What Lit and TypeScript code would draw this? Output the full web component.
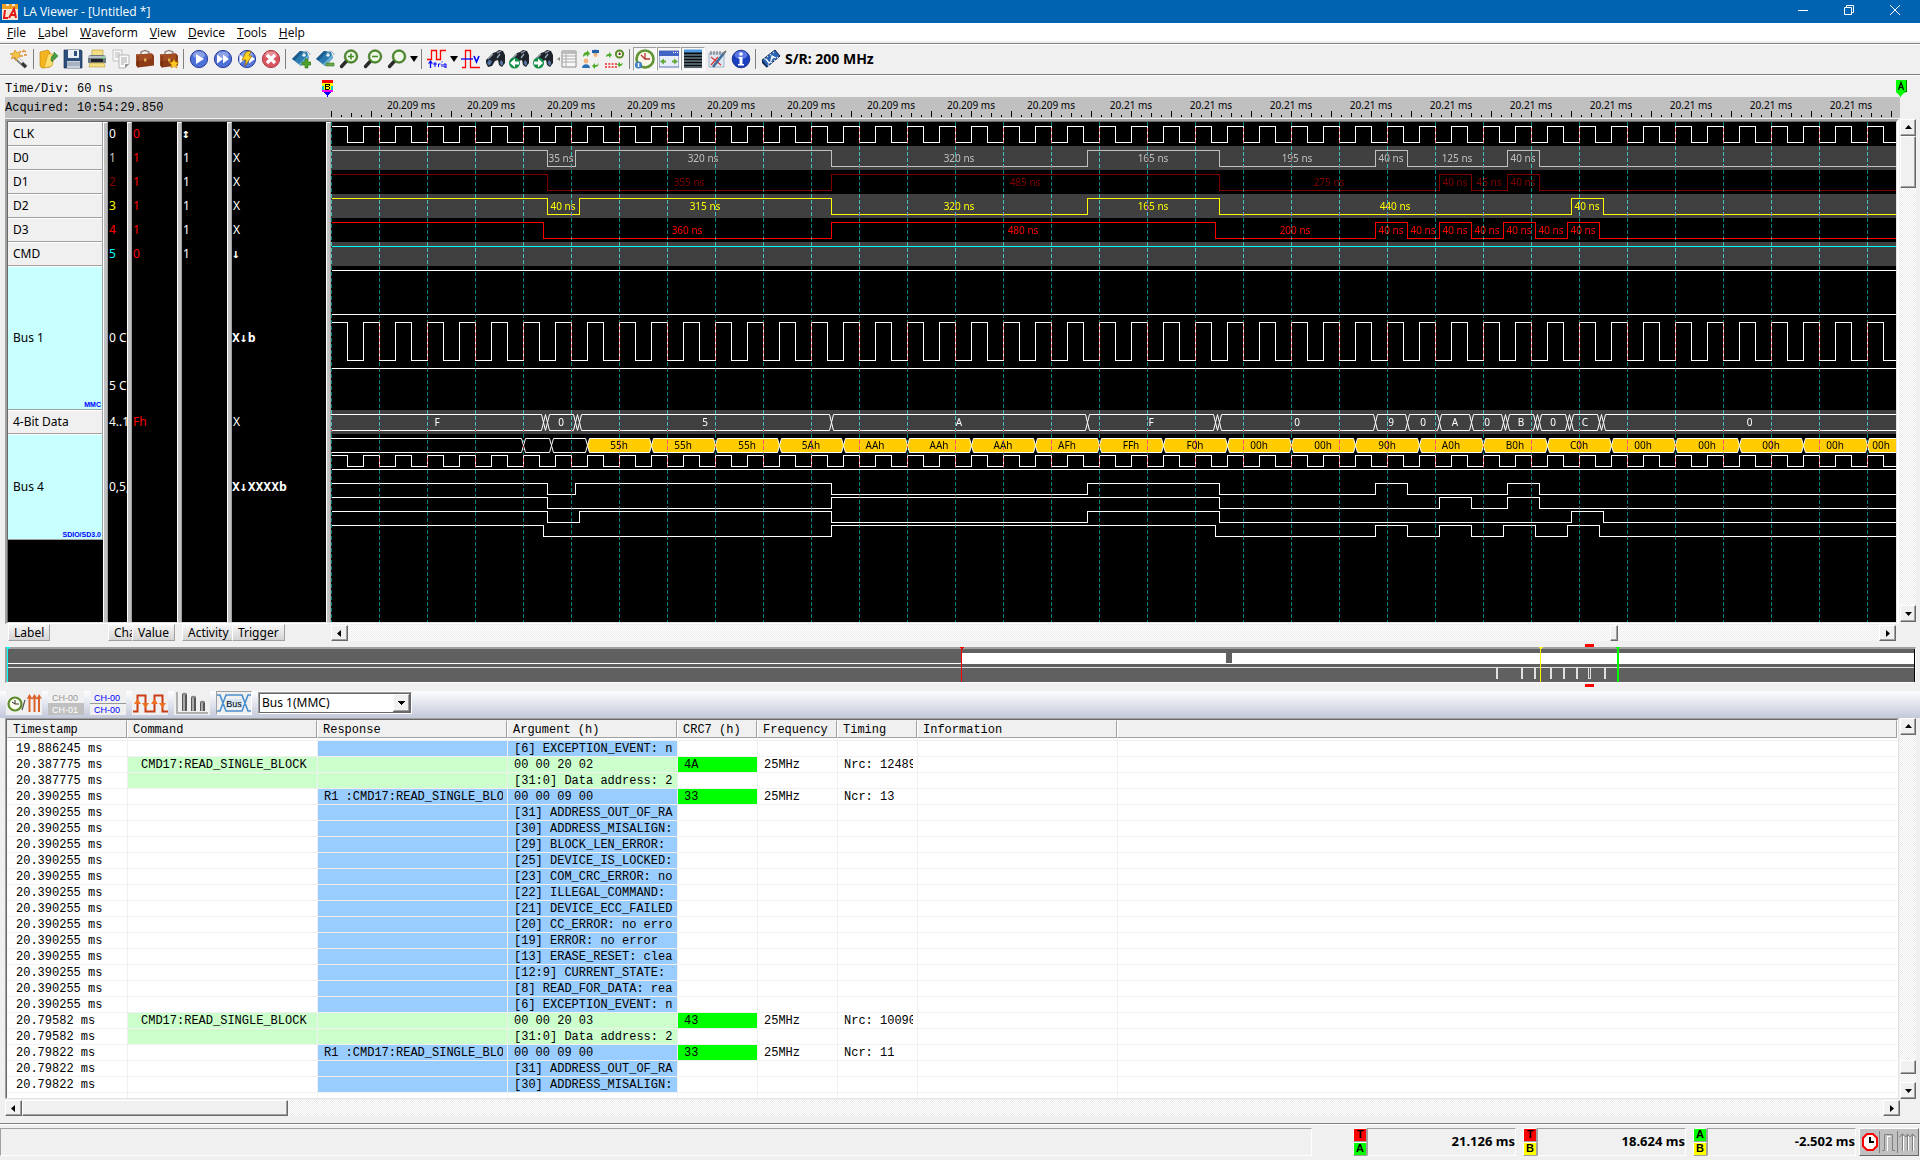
import { LitElement, html, svg, css, nothing } from "lit";
import { customElement, property } from "lit/decorators.js";
import { classMap } from "lit/directives/class-map.js";

/* ---------- signal data (x in pixels from the left edge of the canvas) ---------- */

interface Channel {
  name: string;
  chan: string;
  value: string;
  activity: string;
  trigger: string;
  color: string;
  start: 0 | 1;
  edges: number[];
  times: [number, string][];
}

const END = 4000;
const VIEW_END = 1565;

const CHANNELS: Channel[] = [
  { name: "CLK", chan: "0", value: "0", activity: "↕", trigger: "X", color: "#ffffff", start: 1, edges: clockEdges(), times: [] },
  {
    name: "D0", chan: "1", value: "1", activity: "1", trigger: "X", color: "#c0c0c0", start: 1,
    edges: [216, 244, 500, 756, 888, 1044, 1076, 1176, 1208],
    times: [[230, "35 ns"], [372, "320 ns"], [628, "320 ns"], [822, "165 ns"], [966, "195 ns"], [1060, "40 ns"], [1126, "125 ns"], [1192, "40 ns"]],
  },
  {
    name: "D1", chan: "2", value: "1", activity: "1", trigger: "X", color: "#800000", start: 1,
    edges: [216, 500, 888, 1108, 1140, 1176, 1208],
    times: [[358, "355 ns"], [694, "485 ns"], [998, "275 ns"], [1124, "40 ns"], [1158, "45 ns"], [1192, "40 ns"]],
  },
  {
    name: "D2", chan: "3", value: "1", activity: "1", trigger: "X", color: "#ffff00", start: 1,
    edges: [216, 248, 500, 756, 888, 1240, 1272],
    times: [[232, "40 ns"], [374, "315 ns"], [628, "320 ns"], [822, "165 ns"], [1064, "440 ns"], [1256, "40 ns"]],
  },
  {
    name: "D3", chan: "4", value: "1", activity: "1", trigger: "X", color: "#ff0000", start: 1,
    edges: [212, 500, 884, 1044, 1076, 1108, 1140, 1172, 1204, 1236, 1268],
    times: [[356, "360 ns"], [692, "480 ns"], [964, "200 ns"], [1060, "40 ns"], [1092, "40 ns"], [1124, "40 ns"], [1156, "40 ns"], [1188, "40 ns"], [1220, "40 ns"], [1252, "40 ns"]],
  },
  { name: "CMD", chan: "5", value: "0", activity: "1", trigger: "↓", color: "#00ffff", start: 1, edges: [], times: [] },
];

const BUS_DATA: [number, number, string][] = [
  [0, 212, "F"], [212, 216, ""], [216, 244, "0"], [244, 248, ""], [248, 500, "5"], [500, 756, "A"], [756, 884, "F"],
  [884, 888, ""], [888, 1044, "0"], [1044, 1076, "9"], [1076, 1108, "0"], [1108, 1140, "A"], [1140, 1172, "0"],
  [1172, 1176, ""], [1176, 1204, "B"], [1204, 1208, ""], [1208, 1236, "0"], [1236, 1240, ""], [1240, 1268, "C"],
  [1268, 1272, ""], [1272, VIEW_END, "0"],
];

const BYTES = ["55h", "55h", "55h", "5Ah", "AAh", "AAh", "AAh", "AFh", "FFh", "F0h", "00h", "00h", "90h", "A0h", "B0h", "C0h", "00h", "00h", "00h", "00h"];

function clockEdges(): number[] {
  const out: number[] = [];
  for (let x = 16; x < END; x += 16) out.push(x);
  return out;
}

function stepPath(start: 0 | 1, edges: number[], high: number, low: number): string {
  let level = start;
  let d = `M0 ${level ? high : low}`;
  for (const x of edges) {
    level = level ? 0 : 1;
    d += `H${x}V${level ? high : low}`;
  }
  return d + `H${END}`;
}

function cellPath(a: number, b: number, top: number, bottom: number): string {
  const mid = (top + bottom) / 2;
  return `M${a} ${mid}L${a + 2} ${top}H${b - 2}L${b} ${mid}L${b - 2} ${bottom}H${a + 2}Z`;
}

/* ---------- decoded transactions ---------- */

type Kind = "cmd" | "rsp";
interface Row { t: string; kind: Kind; head?: string; arg: string; crc?: string; freq?: string; timing?: string }

const STATUS_BITS = [
  "[31] ADDRESS_OUT_OF_RANGE: no error", "[30] ADDRESS_MISALIGN: no error", "[29] BLOCK_LEN_ERROR: no error",
  "[25] DEVICE_IS_LOCKED: no", "[23] COM_CRC_ERROR: no error", "[22] ILLEGAL_COMMAND: no error",
  "[21] DEVICE_ECC_FAILED: no error", "[20] CC_ERROR: no error", "[19] ERROR: no error", "[13] ERASE_RESET: cleared",
  "[12:9] CURRENT_STATE: Tran", "[8] READ_FOR_DATA: ready", "[6] EXCEPTION_EVENT: no event",
];
const status = (t: string, n: number): Row[] => STATUS_BITS.slice(0, n).map((arg) => ({ t, kind: "rsp", arg }));

const ROWS: Row[] = [
  { t: "19.886245 ms", kind: "rsp", arg: STATUS_BITS[12] },
  { t: "20.387775 ms", kind: "cmd", head: "CMD17:READ_SINGLE_BLOCK", arg: "00 00 20 02", crc: "4A", freq: "25MHz", timing: "Nrc: 12489" },
  { t: "20.387775 ms", kind: "cmd", arg: "[31:0] Data address: 2002h" },
  { t: "20.390255 ms", kind: "rsp", head: "R1 :CMD17:READ_SINGLE_BLOCK", arg: "00 00 09 00", crc: "33", freq: "25MHz", timing: "Ncr: 13" },
  ...status("20.390255 ms", 13),
  { t: "20.79582 ms", kind: "cmd", head: "CMD17:READ_SINGLE_BLOCK", arg: "00 00 20 03", crc: "43", freq: "25MHz", timing: "Nrc: 10090" },
  { t: "20.79582 ms", kind: "cmd", arg: "[31:0] Data address: 2003h" },
  { t: "20.79822 ms", kind: "rsp", head: "R1 :CMD17:READ_SINGLE_BLOCK", arg: "00 00 09 00", crc: "33", freq: "25MHz", timing: "Ncr: 11" },
  ...status("20.79822 ms", 2),
];

/* ---------- icons, drawn on a 20 x 20 grid ---------- */

const ball = (fill: string, edge: string) => svg`
  <circle cx="10" cy="10" r="8.6" fill=${fill} stroke=${edge}/>
  <ellipse cx="10" cy="6" rx="6" ry="3.6" fill="#fff" opacity=".35"/>`;
const lens = (x: number, y: number) => svg`
  <path d="M${x - 4} ${y + 4}L2.5 17.5" stroke="#2b2b2b" stroke-width="3.4" stroke-linecap="round"/>
  <circle cx=${x} cy=${y} r="5.8" fill="#eef7e8" stroke="#4c8a2a" stroke-width="2"/>
  <circle cx=${x} cy=${y} r="6.8" fill="none" stroke="#2f5d18" stroke-width=".5"/>`;
const binoculars = svg`
  <path d="M1 11L8 4l3-1 3-2 4 1 2 4v8l-3 4-3-2-1-5-3 1-3 5-4 1-2-4z" fill="#1d222b"/>
  <path d="M3 10l5-5M12 4l4-2M12 9l3-4" stroke="#98a4b4" stroke-width="1.3"/>
  <ellipse cx="4.500" cy="13.500" rx="2" ry="2.600" fill="#5876a4" transform="rotate(30 4.500 13.500)"/>
  <ellipse cx="16.500" cy="14" rx="1.500" ry="2.600" fill="#5876a4" transform="rotate(-10 16.500 14)"/>`;
const tag = svg`<path d="M1 10L9 2l7 1 2 6-8 8z" fill="#2b7ab0"/><path d="M1 10l8-8 3 .5-8 9z" fill="#1c5c8c"/>
  <path d="M10 17l8-8-1-3-9 9z" fill="#68aed8"/><circle cx="13" cy="6" r="1.700" fill="#fff"/><path d="M13 6c-1-5 5-5 6 0" fill="none" stroke="#9ab" stroke-width="1"/>`;
const briefcase = svg`<path d="M6 5V3l4-1.500 4 1.500v2" fill="none" stroke="#8a7a70" stroke-width="1.300"/>
  <path d="M1 5.500l16-1 2 2v10l-16 2-2-2z" fill="#8a3a17"/><path d="M1 5.500l16-1v5l-16 3z" fill="#a44d25"/><path d="M3 18.500V7" stroke="#66260c" stroke-width=".8"/>
  <rect x="9" y="9.500" width="2.400" height="3" fill="#e0b050"/>`;
const clockFace = (cx: number, cy: number, r: number) => svg`
  <circle cx=${cx} cy=${cy} r=${r} fill="#fbfbef" stroke="#5b8c2a" stroke-width="2"/>
  <path d="M${cx} ${cy - r + 2}V${cy}H${cx + r - 2}" fill="none" stroke="#c33" stroke-width="1.200"/>
  <circle cx=${cx} cy=${cy} r="1" fill="#333"/>`;

const ICONS: Record<string, unknown> = {
  wand: svg`<path d="M5 7L17 18" stroke="#777" stroke-width="4"/><path d="M6 7L17 17" stroke="#f4f4f4" stroke-width="2"/><path d="M13 14l4 4" stroke="#333" stroke-width="3"/>
    <path d="M1 5l4-1 1-3 2 3 4-2-2 4 4 1-5 1-2 4-1-4-4 2 2-4z" fill="#f6c545" stroke="#d88a1a" stroke-width=".7"/><path d="M13 3l2-1M15 6l3 0M14 1l3 2" stroke="#e08a28" stroke-width="1.300"/>`,
  open: svg`<path d="M1 3l8-2 2 2v15l-8 1-2-2z" fill="#f3b51f" stroke="#b97a08" stroke-width=".6"/><path d="M9 5h7l-3 12-8 2z" fill="#ffdf6f" stroke="#c98f12" stroke-width=".6"/>
    <path d="M12 12c0-5 1-6 3-6V3l4 4-4 4V8.500c-1 0-1 1-1 4z" fill="#44a044" stroke="#27732a" stroke-width=".5"/>`,
  save: svg`<path d="M1 1h17l1 1v17H1z" fill="#2d4f7c" stroke="#1b3355" stroke-width=".7"/><path d="M5 1h11v8H5z" fill="#e9eef5"/><path d="M11 2h3v5h-3z" fill="#2d4f7c"/><path d="M4 12h13v7H4z" fill="#c8d2dd"/><path d="M4 14h13M4 16h13" stroke="#8795a6"/>`,
  print: svg`<path d="M5 1h11v6H5z" fill="#f4df84" stroke="#b79a30" stroke-width=".6"/><path d="M1 7l3-1h12l3 1v7H1z" fill="#6f7780"/><path d="M1 7h18v2H1z" fill="#b9c0c8"/><path d="M4 10h12v3H4z" fill="#20242a"/><path d="M3 14h14l1 4H2z" fill="#f4df84" stroke="#b79a30" stroke-width=".6"/><path d="M15 9h3" stroke="#4f4"/>`,
  docs: svg`<path d="M2 1h9v11H2z" fill="#f7f7f7" stroke="#b5b5b5" stroke-width=".8"/><path d="M4 4h5M4 6h5M4 8h5" stroke="#bbb"/><path d="M8 6h10v9l-4 4H8z" fill="#fafafa" stroke="#a5a5a5" stroke-width=".8"/><path d="M10 9h6M10 11h6M10 13h6M10 15h3" stroke="#aaa"/><path d="M18 15h-4v4z" fill="#999"/>`,
  case: briefcase,
  caseStar: svg`${briefcase}<path d="M15 10l1.500 3 3.300.4-2.400 2.300.6 3.300-3-1.600-3 1.600.6-3.300-2.400-2.300 3.300-.4z" fill="#ffc927" stroke="#c98300" stroke-width=".6"/>`,
  play: svg`${ball("#4d6fd8", "#2c3f9c")}<path d="M7 5l8 5-8 5z" fill="#fff"/>`,
  forward: svg`${ball("#4d6fd8", "#2c3f9c")}<path d="M4 5.500l6 4.500-6 4.500zM10 5.500l6 4.500-6 4.500z" fill="#fff"/>`,
  flash: svg`${ball("#5577dc", "#2c3f9c")}<path d="M2.500 5.500l6 4.500-6 4.500zM12 5.500l6 4.500-6 4.500z" fill="#fff"/><path d="M9 3l5-1-2 5 3 0-7 10 1-6-4 0z" fill="#ffd21f" stroke="#8d6000" stroke-width=".7"/>`,
  stop: svg`${ball("#d95560", "#ad3b46")}<path d="M6 6l8 8M14 6l-8 8" stroke="#fff" stroke-width="3.200"/>`,
  tagAdd: svg`${tag}<path d="M14 10h3v3h3v3h-3v3h-3v-3h-3v-3h3z" fill="#4ca32c" stroke="#2b7012" stroke-width=".6"/>`,
  tagDel: svg`${tag}<path d="M11 14h8v3h-8z" fill="#6aa84a" stroke="#3b7a20" stroke-width=".6"/>`,
  zoomIn: svg`${lens(12, 7.5)}<path d="M12 4.500v6M9 7.500h6" stroke="#4c8a2a" stroke-width="1.600"/>`,
  zoomOut: svg`${lens(12, 7.5)}<path d="M9 7.500h6" stroke="#4c8a2a" stroke-width="1.600"/>`,
  zoom: lens(12, 7.5),
  trig: svg`<path d="M0 10.500h4.500v-9h5v9h4v-9h5.500" fill="none" stroke="#f00" stroke-width="1.300"/>
    <path d="M3.500 19v-6" stroke="#00f" stroke-width="1.300"/><path d="M1 14.500L3.500 11 6 14.500z" fill="#00f"/><path d="M6 15h4M8 13v5M11.500 18v-3h2M15 15v3M15 12.500v1M19 19v-4h-2v3h2" stroke="#00f" fill="none"/>`,
  volt: svg`<path d="M1 18.500h3.500v-17h5v17H19" fill="none" stroke="#f00" stroke-width="1.300"/><path d="M0 10h12" stroke="#00f" stroke-width="1.300"/><path d="M13 7l2.500 6L18 7" fill="none" stroke="#00f" stroke-width="1.600"/>`,
  find: binoculars,
  findPrev: svg`${binoculars}<circle cx="5.500" cy="14" r="5.500" fill="#0f9048"/><path d="M10 12.500H6V9.500L1 14l5 4.500v-3h4z" fill="#fff"/>`,
  findNext: svg`${binoculars}<circle cx="5.500" cy="14" r="5.500" fill="#0f9048"/><path d="M1 12.500h4V9.500L10 14l-5 4.500v-3H1z" fill="#fff"/>`,
  list: svg`<path d="M5 2h14v16H5z" fill="#f8f8f8" stroke="#8c8c8c"/><path d="M5 2h14v3H5z" fill="#bbb"/><path d="M5 7h14M5 10h14M5 13h14M9 5v13" stroke="#aaa"/><path d="M0 10l3-2v4z" fill="#888"/>`,
  swap: svg`<circle cx="5" cy="12" r="2.400" fill="#f4b27c"/><path d="M1 19c0-5 8-5 8 0z" fill="#2b6fb8"/><circle cx="14.500" cy="3" r="2.400" fill="#3e87cf"/><path d="M11 1h7v3h-7z" fill="#2461a8"/><circle cx="14.500" cy="6" r="2" fill="#f4b27c"/>
    <path d="M2 8c0-4 2-5 4-5V1l3 3.500L6 8V6C4 6 3 7 2 8z" fill="#52ad2d"/><path d="M18 12c0 4-2 4-4 4v-2l-3 3 3 3v-2c3 0 4-2 4-6z" fill="#52ad2d"/>`,
  timeSwap: svg`${clockFace(14.5, 5, 3.6)}<path d="M1 8c0-3 2-3 3-3V3l3 3-3 3V7C3 7 2 7 1 8z" fill="#52ad2d"/><path d="M18 12c0 3-2 3-3 3v-2l-3 2.500 3 3V17c2 0 3-2 3-5z" fill="#52ad2d"/><path d="M0 15h12M0 18h12" stroke="#e22" stroke-width="1.600" stroke-dasharray="2 1.300"/>`,
  clock: svg`<circle cx="10" cy="10" r="8.500" fill="#fbf8ea" stroke="#5f9334" stroke-width="2.600"/><path d="M10 4v6h5M10 10L6 6" fill="none" stroke="#b33" stroke-width="1.300"/><circle cx="3.500" cy="16" r="3.600" fill="#3f80c4"/><path d="M3.500 14v4" stroke="#fff" stroke-width="1.500"/>`,
  fit: svg`<path d="M0 2h20v16H0z" fill="#e9edfa" stroke="#5a70b8"/><path d="M0 2h20v5H0z" fill="#4263c4"/><path d="M14 3.500h1M16 3.500h1M18 3.500h1" stroke="#fff"/><path d="M1 12.500l4-3v2h2v2H5v2zM19 12.500l-4-3v2h-2v2h2v2z" fill="#62a838"/>`,
  rows: svg`<path d="M1 1h18v18H1z" fill="#0b0b0b"/><path d="M1 2h18" stroke="#4c9be0" stroke-width="3"/><path d="M1 6h18M1 9h18M1 12h18M1 15h18M1 18h18" stroke="#8fb4c8"/>`,
  notes: svg`<path d="M2 4h15v14H2z" fill="#dfe8f2" stroke="#8fa3ba" stroke-width=".8"/><path d="M4 2v4M7 2v4M10 2v4M13 2v4" stroke="#667" stroke-width="1"/><path d="M4 8l10 8M4 16l7-8" stroke="#d33" stroke-width="1.200"/><path d="M6 18L17 4" stroke="#3d6f9c" stroke-width="2.600"/><path d="M16 5l3-3" stroke="#777" stroke-width="2"/>`,
  info: svg`<circle cx="10" cy="10" r="8.800" fill="#1c3fc0" stroke="#0c1f80" stroke-width=".8"/><ellipse cx="10" cy="6" rx="6.500" ry="4" fill="#9ab4ff" opacity=".5"/><circle cx="10" cy="5" r="1.800" fill="#fff"/><path d="M7.500 8h4v7h1.500v1.500h-6V15h1.500V9.500h-1z" fill="#fff"/>`,
  chip: svg`<path d="M1 11L14 1l5 6L6 18z" fill="#2a62b4" stroke="#122a52"/><path d="M1 11v3l5 5v-2z" fill="#122a52"/><path d="M3 9l1.500 1.500M6 7l1 1M9 5l1 1M12 3l1 1M8 17l-1-1.500M11 14l-1-1M14 12l-1-1M17 9l-1-1" stroke="#cfd8e8" stroke-width="1.200"/><path d="M5 10l3 4 2-1.500M10 12l1-5 4 2M10.500 10l2.500-2" stroke="#fff" fill="none" stroke-width="1.300"/>`,
};

const TOOLS: (string | null)[] = [
  "wand", null, "open", "save", "print", "docs", "case", "caseStar", null, "play", "forward", "flash", "stop", null,
  "tagAdd", "tagDel", "zoomIn", "zoomOut", "zoom", "menu:zoom", null, "trig", "menu:trigger", "volt", "find", "findPrev", "findNext",
  "list", "swap", "timeSwap", null, "*clock", "*fit", "*rows", "notes", "info", null,
];

/* ---------- classic scrollbar ---------- */

@customElement("classic-scrollbar")
export class ClassicScrollbar extends LitElement {
  @property({ type: Boolean, reflect: true }) vertical = false;
  @property({ type: Number }) before = 0;
  @property({ type: Number }) thumb = 20;
  @property({ type: Number }) after = 1;

  static styles = css`
    :host { display: flex; height: 16px; background: repeating-conic-gradient(#ffffff 0 25%, #ececec 0 50%) 0 0 / 2px 2px; }
    :host([vertical]) { flex-direction: column; width: 16px; height: auto; }
    button, .thumb {
      flex: none; box-sizing: border-box; margin: 0; padding: 0; background: #f0f0f0;
      border: 1px solid; border-color: #ffffff #696969 #696969 #ffffff; box-shadow: inset -1px -1px #a0a0a0;
    }
    button { display: grid; place-items: center; width: 17px; height: 16px; }
    :host([vertical]) button { width: 16px; height: 17px; }
  `;

  render() {
    const v = this.vertical;
    const size = v ? `height:${this.thumb}px` : `width:${this.thumb}px`;
    return html`
      <button aria-label=${v ? "Scroll up" : "Scroll left"}><svg width="7" height="7"><path d=${v ? "M0 5h7L3.500 1z" : "M5 0v7L1 3.500z"} /></svg></button>
      <span style="flex:${this.before} 0 0"></span>
      <span class="thumb" style=${size}></span>
      <span style="flex:${this.after} 0 0"></span>
      <button aria-label=${v ? "Scroll down" : "Scroll right"}><svg width="7" height="7"><path d=${v ? "M0 2h7L3.500 6z" : "M2 0v7l4-3.500z"} /></svg></button>
    `;
  }
}

/* ---------- waveform canvas ---------- */

@customElement("wave-canvas")
export class WaveCanvas extends LitElement {
  static styles = css`
    :host { display: block; min-width: 0; overflow: hidden; }
    svg { display: block; width: 100%; height: 500px; background: #000; isolation: isolate; }
    text { font: 10px "Noto Sans", sans-serif; text-anchor: middle; }
    .lines { fill: none; stroke: #fff; shape-rendering: crispEdges; }
    .cells { fill: none; stroke: #fff; }
    .grid { mix-blend-mode: difference; shape-rendering: crispEdges; stroke-dasharray: 4 2; }
  `;

  private grid() {
    const bands: [number, number, boolean][] = [
      [0, 24, false], [24, 48, true], [48, 72, false], [72, 96, true], [96, 120, false], [120, 144, true],
      [144, 288, false], [288, 312, true], [312, 500, false],
    ];
    return bands.map(([a, b, lit]) => {
      let d = "";
      for (let x = 0; x < END; x += 48) d += `M${x + 0.5} ${a}V${b}`;
      return svg`<path class="grid" d=${d} stroke=${lit ? "#00ffff" : "#008080"} />`;
    });
  }

  render() {
    const ch = CHANNELS;
    return html`<svg role="img" aria-label="Waveforms">
      <rect width="100%" height="500" fill="#000" />
      ${[24, 72, 120, 288].map((y) => svg`<rect y=${y} width="100%" height="24" fill="#404040" />`)}
      <g class="lines" transform="translate(.5 .5)">
        ${ch.map((c, i) => svg`<path d=${stepPath(c.start, c.edges, i * 24 + 4, i * 24 + 20)} stroke=${c.color} />`)}
        <path d="M0 148H${END}M0 192H${END}M0 246H${END}M0 347H${END}" />
        <path d=${stepPath(1, ch[0].edges, 200, 238)} />
        <path d=${stepPath(1, ch[0].edges, 333, 344)} />
        ${ch.slice(1, 5).map((c, i) => svg`<path d=${stepPath(c.start, c.edges, 361 + i * 14, 372 + i * 14)} />`)}
      </g>
      <g class="cells" transform="translate(.5 .5)">
        ${BUS_DATA.map(([a, b]) => svg`<path d=${cellPath(a || -4, b === VIEW_END ? END : b, 292, 308)} />`)}
        <path d=${cellPath(-4, 192, 316, 330)} />
        <path d=${cellPath(192, 220, 316, 330)} />
        <path d=${cellPath(220, 256, 316, 330)} />
        ${BYTES.map((_, i) => svg`<path d=${cellPath(256 + i * 64, 320 + i * 64, 316, 330)} fill="#ffcc00" />`)}
        <path d=${cellPath(1536, END, 316, 330)} fill="#ffcc00" />
      </g>
      ${ch.map((c, i) => c.times.map(([x, t]) => svg`<text x=${x} y=${i * 24 + 16} fill=${c.color}>${t}</text>`))}
      <g fill="#fff">${BUS_DATA.map(([a, b, t]) => (t ? svg`<text x=${(a + b) / 2} y="304">${t}</text>` : nothing))}</g>
      <g fill="#000">
        ${BYTES.map((t, i) => svg`<text x=${288 + i * 64} y="327">${t}</text>`)}
        <text x="1550" y="327">00h</text>
      </g>
      ${this.grid()}
    </svg>`;
  }
}

/* ---------- application window ---------- */

@customElement("app-root")
export class AppRoot extends LitElement {
  static styles = css`
    :host {
      display: flex; flex-direction: column; min-height: 100vh; background: #f0f0f0; color: #000;
      font: 12px/16px "Noto Sans", "Open Sans", sans-serif; overflow: hidden;
    }
    * { box-sizing: border-box; }
    button { margin: 0; padding: 0; border: 0; background: none; font: inherit; color: inherit; }
    svg { display: block; }

    .titlebar { display: flex; align-items: center; height: 23px; padding-left: 2px; background: #0063b1; color: #fff; }
    .titlebar h1 { flex: 1; margin: 0 0 0 5px; font: 12px/20px "Open Sans", sans-serif; }
    .titlebar button { display: grid; place-items: center; width: 46px; height: 20px; align-self: start; }
    .titlebar button:last-child { margin-right: 2px; }

    .menubar { display: flex; gap: 12px; height: 20px; padding: 1px 7px 0; background: #fff; border-bottom: 2px solid #f0f0f0; }
    .menubar button { font: 12px/18px "Open Sans", sans-serif; }

    .toolbar { display: flex; align-items: center; height: 32px; padding-left: 7px; border-top: 1px solid #808080; border-bottom: 1px solid #808080; box-shadow: inset 0 1px #fff, 0 1px #fff; }
    .tool { display: grid; place-items: center; width: 24px; height: 24px; }
    .tool.on { border: 1px solid; border-color: #a0a0a0 #fff #fff #a0a0a0; background: #f6f6f6; }
    .drop { display: grid; place-items: center; width: 10px; height: 24px; }
    .sep { width: 6px; height: 20px; background: linear-gradient(#808080, #808080) 2px 0 / 1px 100% no-repeat; }
    .rate { margin-left: 2px; font-weight: 700; font-size: 14px; }

    .mono { font: 12px/22px "Liberation Mono", monospace; }
    .marks { display: flex; height: 22px; padding: 1px 13px 0 5px; }
    .marks .mono { width: 317px; margin-top: 2px; }
    .marks .fill { flex: 1; }
    .marks svg { margin-top: 4px; }
    .ruler { display: flex; height: 21px; margin: 0 20px 1px 5px; background: #c0c0c0; }
    .ruler .mono { flex: none; width: 326px; }
    .ruler svg { flex: 1; min-width: 0; height: 21px; }
    .ruler text { font: 10px "Noto Sans", sans-serif; text-anchor: middle; }

    .scope { display: flex; margin: 0 4px 0 5px; }
    .scope classic-scrollbar { margin-bottom: 2px; }
    .panel { flex: 1; min-width: 0; margin-right: 1px; border: 2px solid; border-color: #a0a0a0 #fff #fff #a0a0a0; border-bottom-width: 1px; }
    .columns { display: flex; background: #000; border: 1px solid; border-color: #696969 #e3e3e3 #e3e3e3 #696969; }
    .col { flex: none; overflow: hidden; color: #fff; white-space: nowrap; }
    .col > div { display: flex; align-items: center; height: 24px; padding-left: 1px; }
    .col > .bus1 { height: 144px; }
    .col > .bus4 { height: 106px; }
    .col.label { width: 95px; color: #000; }
    .col.label > div { padding-left: 5px; background: #f0f0f0; border-top: 1px solid #fff; border-bottom: 1px solid #a0a0a0; border-right: 1px solid #a0a0a0; }
    .col.label > .bus1, .col.label > .bus4 { background: #c8ffff; position: relative; }
    .proto { position: absolute; right: 1px; bottom: 0; color: #00f; font: 700 7px/8px "Liberation Sans", sans-serif; }
    .chan { width: 19px; }
    .value { width: 45px; }
    .col.value > div { color: #f00; }
    .act { width: 45px; }
    .trig { width: 94px; }
    .col > .glyphs { padding-left: 0; font: 700 13px/16px "DejaVu Sans Mono", monospace; }
    .col > .stack { flex-direction: column; align-items: flex-start; justify-content: space-between; padding-top: 64px; padding-bottom: 16px; }
    .bar { flex: none; width: 5px; background: #c0c0c0; border-left: 1px solid #fff; border-right: 1px solid #a0a0a0; border-top: 1px solid #fff; }
    wave-canvas { flex: 1; }

    .heads { display: flex; height: 17px; margin: 0 24px 0 8px; }
    .head { flex: none; overflow: hidden; }
    .head button { height: 17px; padding: 0 5px; text-align: left; white-space: nowrap; background: linear-gradient(#f6f6f6, #d4d4d4); border: 1px solid; border-color: #fff #a0a0a0 #a0a0a0 #fff; line-height: 14px; }
    .h1 { width: 100px; } .h2 { width: 24px; } .h3 { width: 50px; } .h4 { width: 50px; } .h5 { width: 99px; }
    .heads classic-scrollbar { flex: 1; margin-top: 1px; }

    .overview { margin: 6px 4px 0 5px; border: 2px solid; border-color: #a0a0a0 #fff #fff #a0a0a0; border-width: 2px 1px 1px 2px; }
    .overview svg { width: 100%; height: 33px; overflow: visible; shape-rendering: crispEdges; }

    .viewbar { display: flex; align-items: flex-start; gap: 6px; height: 27px; margin-top: 8px; padding: 0 6px; background: linear-gradient(#fdfeff, #c3c8da); }
    .view { width: 36px; height: 24px; background: #f0f0f0; }
    .view.on { border: 1px solid; border-color: #a0a0a0 #fff #fff #a0a0a0; }
    .combo { position: relative; display: block; width: 154px; height: 22px; margin-top: 1px; }
    .combo select { width: 100%; height: 100%; margin: 0; padding: 0 18px 0 3px; appearance: none; border: 1px solid; border-color: #a0a0a0 #fff #fff #a0a0a0; border-radius: 0; outline: 1px solid #696969; outline-offset: -2px; background: #fff; color: #000; font: inherit; }
    .combo svg { position: absolute; right: 2px; top: 2px; pointer-events: none; }

    .grid { display: flex; flex: 1 1 380px; min-height: 0; margin: 0 4px 0 5px; overflow: hidden; }
    .sheet { flex: 1 1 0; min-width: 0; height: 381px; margin-right: 1px; overflow: hidden; background: #fff; border: 1px solid; border-color: #a0a0a0 #e3e3e3 #e3e3e3 #a0a0a0; }
    .sheet > div { border: 1px solid; border-color: #696969 #fff #fff #696969; }
    table { width: 100%; table-layout: fixed; border-collapse: separate; border-spacing: 0; font: 12px/17px "Liberation Mono", monospace; }
    th { height: 18px; padding: 2px 0 0 5px; text-align: left; font-weight: 400; line-height: 14px; background: #f0f0f0; border: 1px solid; border-color: #f0f0f0 #a0a0a0 #a0a0a0 #fff; }
    th:first-child { border-left-color: #f0f0f0; }
    .gap td { height: 3px; }
    td { height: 16px; padding: 0; border-left: 1px solid #f0f0f0; border-bottom: 1px solid #f0f0f0; }
    td:first-child { border-left: 0; }
    td span { display: block; height: 15px; margin: 0 4px 0 6px; overflow: hidden; white-space: pre; }
    td:first-child span { margin-left: 9px; }
    td.command span { margin-left: 13px; }
    .g { background: #ccffcc; }
    .b { background: #99ccff; }
    .ok { background: #00ff00; }
    .hscroll { margin: 1px 20px 0 5px; flex: none; }

    .status { display: flex; align-items: flex-start; flex: none; height: 37px; margin-top: 7px; padding: 4px 1px 0 0; border-top: 1px solid #808080; box-shadow: inset 0 1px #fff; }
    .well { height: 28px; border: 1px solid; border-color: #a0a0a0 #fff #fff #a0a0a0; }
    .msg { flex: 1; margin-right: 34px; }
    .pair { display: flex; flex-direction: column; width: 14px; margin-left: 7px; }
    .pair span { height: 14px; border: 1px solid; border-color: #fff #a0a0a0 #a0a0a0 #fff; text-align: center; font: 700 11px/10px "Liberation Sans", sans-serif; }
    .r { background: #f00; } .gr { background: #0f0; } .y { background: #ff0; }
    .num { width: 149px; text-align: right; font: 700 13px/24px "Noto Sans", sans-serif; }
    .modes { display: flex; width: 60px; height: 28px; margin-left: 3px; background: #c0c0c0; border: 1px solid; border-color: #fff #696969 #696969 #fff; }
    .modes button { width: 19px; height: 26px; display: grid; place-items: center; }
  `;

  private icon(name: string) {
    return html`<svg width="20" height="20" viewBox="0 0 20 20" fill="none">${ICONS[name]}</svg>`;
  }

  private titlebar() {
    return html`<header class="titlebar">
      <svg width="16" height="16" viewBox="0 0 16 16" aria-hidden="true">
        <rect width="16" height="16" fill="#f4e6d4" /><path d="M0 0h4v2h3V0h3v2h3V0h3v5H0z" fill="#f0a020" />
        <path d="M3 6l-1 8h4M7 14l5-9 2 9M9 11h5" stroke="#e01818" stroke-width="2" fill="none" />
      </svg>
      <h1>LA Viewer - [Untitled *]</h1>
      <button aria-label="Minimize"><svg width="10" height="10" stroke="#fff"><path d="M0 5.500h10" /></svg></button>
      <button aria-label="Restore"><svg width="10" height="10" stroke="#fff" fill="none"><path d="M.5 2.500h7v7h-7zM2.500 2V.5h7v7H8" /></svg></button>
      <button aria-label="Close"><svg width="10" height="10" stroke="#fff"><path d="M0 0l10 10M10 0L0 10" /></svg></button>
    </header>`;
  }

  private toolbar() {
    return html`<div class="toolbar" role="toolbar" aria-label="Main">
      ${TOOLS.map((t) => {
        if (t === null) return html`<span class="sep"></span>`;
        if (t.startsWith("menu:")) return html`<button class="drop" aria-label="${t.slice(5)} options"><svg width="8" height="6"><path d="M0 0h8L4 6z" /></svg></button>`;
        const on = t.startsWith("*");
        const name = on ? t.slice(1) : t;
        return html`<button class=${classMap({ tool: true, on })} aria-label=${name}>${this.icon(name)}</button>`;
      })}
      <button class="tool" aria-label="Sample rate">${this.icon("chip")}</button>
      <span class="rate">S/R: 200 MHz</span>
    </div>`;
  }

  private ruler() {
    let d = "";
    for (let x = 0; x < END; x += 10) d += `M${x + 0.5} 20V${x % 40 === 0 ? 14 : x % 20 === 0 ? 16 : 18}`;
    const marks = Array.from({ length: 19 }, (_, i) => i + 1);
    return html`
      <div class="marks">
        <span class="mono">Time/Div: 60 ns</span>
        <svg width="11" height="17" viewBox="0 0 11 17" shape-rendering="crispEdges">
          <path d="M0 0h11v3H0z" fill="#f00" /><path d="M0 3h11v4H0z" fill="#ff0" /><path d="M0 6h2v4H0zM9 6h2v4H9z" fill="#0cc" /><path d="M0 10h11v2H0z" fill="#f0f" />
          <path d="M1 12h9l-4 3v2H5v-2z" fill="#00f" /><path d="M2 3h7v7H2z" fill="#ff0" /><path d="M3.500 3.500v6M3 4h4M3 6.500h4M3 9h4M7.500 4v2M7.500 7v2" stroke="#000" />
        </svg>
        <span class="fill"></span>
        <svg width="11" height="17" viewBox="0 0 11 17">
          <path d="M0 0h11v12l-3 1-3 3v1H4v-1l-3-3-1-1z" fill="#0f0" /><path d="M10 0h1v12h-4l3-1z" fill="#008000" /><path d="M2.500 10L5 2.500 7.500 10M3 7.500h4" stroke="#000" stroke-width="1.200" fill="none" />
        </svg>
      </div>
      <div class="ruler">
        <span class="mono">Acquired: 10:54:29.850</span>
        <svg role="img" aria-label="Time ruler">
          <path d=${d} stroke="#000" shape-rendering="crispEdges" />
          ${marks.map((k) => svg`<text x=${k * 80} y="12">${k < 10 ? "20.209 ms" : "20.21 ms"}</text>`)}
        </svg>
      </div>`;
  }

  private scope() {
    const ch = CHANNELS;
    return html`
      <div class="scope">
        <div class="panel"><div class="columns">
          <div class="col label">
            ${ch.map((c) => html`<div>${c.name}</div>`)}
            <div class="bus1">Bus 1<span class="proto">MMC</span></div>
            <div>4-Bit Data</div>
            <div class="bus4">Bus 4<span class="proto">SDIO/SD3.0</span></div>
          </div>
          <span class="bar"></span>
          <div class="col chan">
            ${ch.map((c) => html`<div style="color:${c.color}">${c.chan}</div>`)}
            <div class="bus1 stack"><span>0 CLK</span><span>5 CMD</span></div>
            <div>4..1</div>
            <div class="bus4">0,5,4..1</div>
          </div>
          <span class="bar"></span>
          <div class="col value">${ch.map((c) => html`<div>${c.value}</div>`)}<div class="bus1"></div><div>Fh</div></div>
          <span class="bar"></span>
          <div class="col act">${ch.map((c) => html`<div class=${c.activity === "1" ? "" : "glyphs"}>${c.activity}</div>`)}</div>
          <span class="bar"></span>
          <div class="col trig">
            ${ch.map((c) => html`<div class=${c.trigger === "X" ? "" : "glyphs"}>${c.trigger}</div>`)}
            <div class="bus1 glyphs">X↓b</div><div>X</div><div class="bus4 glyphs">X↓XXXXb</div>
          </div>
          <span class="bar"></span>
          <wave-canvas></wave-canvas>
        </div></div>
        <classic-scrollbar vertical .before=${0} .thumb=${52} .after=${1}></classic-scrollbar>
      </div>
      <div class="heads">
        <div class="head h1"><button>Label</button></div>
        <div class="head h2"><button>Channel</button></div>
        <div class="head h3"><button>Value</button></div>
        <div class="head h4"><button>Activity</button></div>
        <div class="head h5"><button>Trigger</button></div>
        <classic-scrollbar .before=${1263} .thumb=${8} .after=${261}></classic-scrollbar>
      </div>`;
  }

  private overview() {
    const pulses = [1490, 1515, 1528, 1544, 1557, 1570, 1598, 1611];
    return html`<div class="overview"><svg viewBox="0 0 1908 33" preserveAspectRatio="none" role="img" aria-label="Capture overview">
      <rect width="1908" height="33" fill="#606060" />
      <rect y="14" width="954" height="1" fill="#fff" /><rect x="954" y="4" width="954" height="11" fill="#fff" /><rect x="1219" y="4" width="6" height="10" fill="#606060" />
      <rect y="18" width="1908" height="1" fill="#e0e0e0" />
      ${pulses.map((x) => svg`<rect x=${x - 1} y="18" width="2" height="12" fill="#e0e0e0" />`)}
      <path d="M1581.500 18v11.500h2V18" fill="none" stroke="#e0e0e0" />
      <path d="M-1 -2h4l-2 2v33H0V0z" fill="#0ff" />
      <path d="M952 -2h5l-2 2v33h-1V0z" fill="#f00" />
      <path d="M1531 -2h5l-2 2v33h-1V0z" fill="#ff0" />
      <path d="M1608 -2h5l-1 2v33h-2V0z" fill="#0f0" />
      <rect x="1578" y="-5" width="9" height="3" fill="#f00" /><rect x="1578" y="35" width="9" height="3" fill="#f00" />
      <rect x="1907" width="1" height="33" />
    </svg></div>`;
  }

  private viewbar() {
    const bar = (x: number, y: number) => svg`<rect x=${x} y=${y} width="5" height=${20 - y} fill="#555"/><rect x=${x + 1} y=${y} width="2" height=${20 - y} fill="#aaa"/><ellipse cx=${x + 2.5} cy=${y} rx="2.500" ry="1.200" fill="#888"/>`;
    return html`<div class="viewbar">
      <button class="view" aria-label="Time and transitions"><svg width="36" height="24">
        <circle cx="9" cy="13" r="6.500" fill="#fbfbef" stroke="#5b8c2a" stroke-width="2.200" /><path d="M9 9v4h4M9 13l-3-2" stroke="#333" fill="none" />
        <path d="M16 19l3-10" stroke="#555" stroke-width="1.200" />
        <path d="M23.500 21V5M28.500 21V5M33 21V5" stroke="#d9622b" stroke-width="2" /><path d="M20.500 8l3-5L26 7l2.500-4L31 7l2-4 3 5-3-1-2 1.500-2.500-1.500L26 8.500 23.500 7z" fill="#d9622b" />
      </svg></button>
      <button class="view" aria-label="Hide channels"><svg width="36" height="24" font-family="Liberation Sans, sans-serif" font-size="9">
        <rect y="12" width="36" height="12" fill="#c0c0c0" /><text x="4" y="10" fill="#999">CH-00</text><text x="4" y="22" fill="#fff">CH-01</text>
      </svg></button>
      <button class="view" aria-label="Show channels"><svg width="36" height="24" font-family="Liberation Sans, sans-serif" font-size="9" fill="#00f">
        <path d="M0 12.500h36" stroke="#999" /><text x="4" y="10">CH-00</text><text x="4" y="22">CH-00</text>
      </svg></button>
      <button class="view" aria-label="Edges"><svg width="36" height="24" fill="none" stroke="#c83c14" stroke-width="2">
        <path d="M1 20.500h4.500v-16h8v16h9v-16h8v16H36" /><path d="M2 13l3.500-5L9 13zM10 12l3.500 5 3.500-5zM19 13l3.500-5L26 13zM27 12l3.500 5 3.500-5z" fill="#f07020" stroke="none" />
      </svg></button>
      <button class="view" aria-label="Statistics"><svg width="36" height="24">
        <path d="M3 1v21h31" stroke="#999" stroke-width="1.500" fill="none" />${bar(8, 3)}${bar(17, 6)}${bar(26, 11)}
      </svg></button>
      <button class="view on" aria-label="Bus view"><svg width="34" height="22">
        <path d="M0 3h3l6 16h16l6-16h3M0 19h3L9 3h16l6 16h3" fill="none" stroke="#4b8fcd" stroke-width="1.600" />
        <rect x="9" y="7" width="16" height="9" fill="#d5e6f6" /><text x="17" y="15" font-family="Liberation Sans, sans-serif" font-size="9" text-anchor="middle">Bus</text>
      </svg></button>
      <label class="combo">
        <select aria-label="Bus"><option>Bus 1(MMC)</option></select>
        <svg width="17" height="18" shape-rendering="crispEdges"><path d="M0 0h17v18H0z" fill="#696969" /><path d="M0 0h16v17H0z" fill="#fff" /><path d="M1 1h15v16H1z" fill="#a0a0a0" /><path d="M1 1h14v15H1z" fill="#f0f0f0" /><path d="M5 7h7L8.500 11z" /></svg>
      </label>
    </div>`;
  }

  private row(r: Row) {
    const cmd = r.kind === "cmd";
    const tint = cmd ? "g" : "b";
    return html`<tr>
      <td><span>${r.t}</span></td>
      <td class="command ${cmd ? "g" : ""}"><span>${cmd ? r.head : nothing}</span></td>
      <td class=${tint}><span>${cmd ? nothing : r.head}</span></td>
      <td class=${tint}><span>${r.arg}</span></td>
      <td class=${r.crc ? "ok" : ""}><span>${r.crc}</span></td>
      <td><span>${r.freq}</span></td>
      <td><span>${r.timing}</span></td>
      <td></td><td></td>
    </tr>`;
  }

  private sheet() {
    const heads: [string, number][] = [["Timestamp", 120], ["Command", 190], ["Response", 190], ["Argument (h)", 170], ["CRC7 (h)", 80], ["Frequency", 80], ["Timing", 80], ["Information", 200]];
    const blank = html`${Array.from({ length: 9 }, () => html`<td></td>`)}`;
    return html`
      <div class="grid">
        <div class="sheet"><div><table>
          <colgroup>${heads.map(([, w]) => html`<col style="width:${w}px">`)}<col></colgroup>
          <thead><tr>${heads.map(([h]) => html`<th scope="col">${h}</th>`)}<th></th></tr></thead>
          <tbody><tr class="gap">${blank}</tr>${ROWS.map((r) => this.row(r))}<tr>${blank}</tr></tbody>
        </table></div></div>
        <classic-scrollbar vertical .before=${325} .thumb=${14} .after=${8}></classic-scrollbar>
      </div>
      <classic-scrollbar class="hscroll" .before=${0} .thumb=${266} .after=${1}></classic-scrollbar>`;
  }

  private statusbar() {
    const pair = (a: string, ca: string, b: string, cb: string, v: string) => html`
      <div class="pair"><span class=${ca}>${a}</span><span class=${cb}>${b}</span></div><div class="well num">${v}</div>`;
    return html`<footer class="status">
      <div class="well msg"></div>
      ${pair("T", "r", "A", "gr", "21.126 ms")}
      ${pair("T", "r", "B", "y", "18.624 ms")}
      ${pair("A", "gr", "B", "y", "-2.502 ms")}
      <div class="modes">
        <button aria-label="Timing"><svg width="18" height="20" fill="none"><path d="M6 2h6l4 4v8l-4 4H6l-4-4V6z" fill="#fff" stroke="#f00" stroke-width="2" /><path d="M9 5v5h4" stroke="#000" stroke-width="2" /></svg></button>
        <button aria-label="State"><svg width="19" height="22" fill="none" stroke="#808080"><path d="M.5 0v22M18.500 0v22M3 19.500h2.500v-16h8v16H16" /><path d="M8.500 20V5.500h3" stroke="#fff" /></svg></button>
        <button aria-label="Transitions"><svg width="19" height="22" fill="none" stroke="#808080"><path d="M4.500 20V3M9.500 20V3M14.500 20V3M1 6l3.500-3L8 6l1.500-3L12 6l2.500-3L18 6" /><path d="M5.500 20V5M10.500 20V5M15.500 20V5" stroke="#fff" /></svg></button>
      </div>
    </footer>`;
  }

  render() {
    const menus = ["File", "Label", "Waveform", "View", "Device", "Tools", "Help"];
    return html`
      ${this.titlebar()}
      <nav class="menubar">${menus.map((m) => html`<button><u>${m[0]}</u>${m.slice(1)}</button>`)}</nav>
      ${this.toolbar()} ${this.ruler()} ${this.scope()} ${this.overview()} ${this.viewbar()} ${this.sheet()} ${this.statusbar()}
    `;
  }
}
